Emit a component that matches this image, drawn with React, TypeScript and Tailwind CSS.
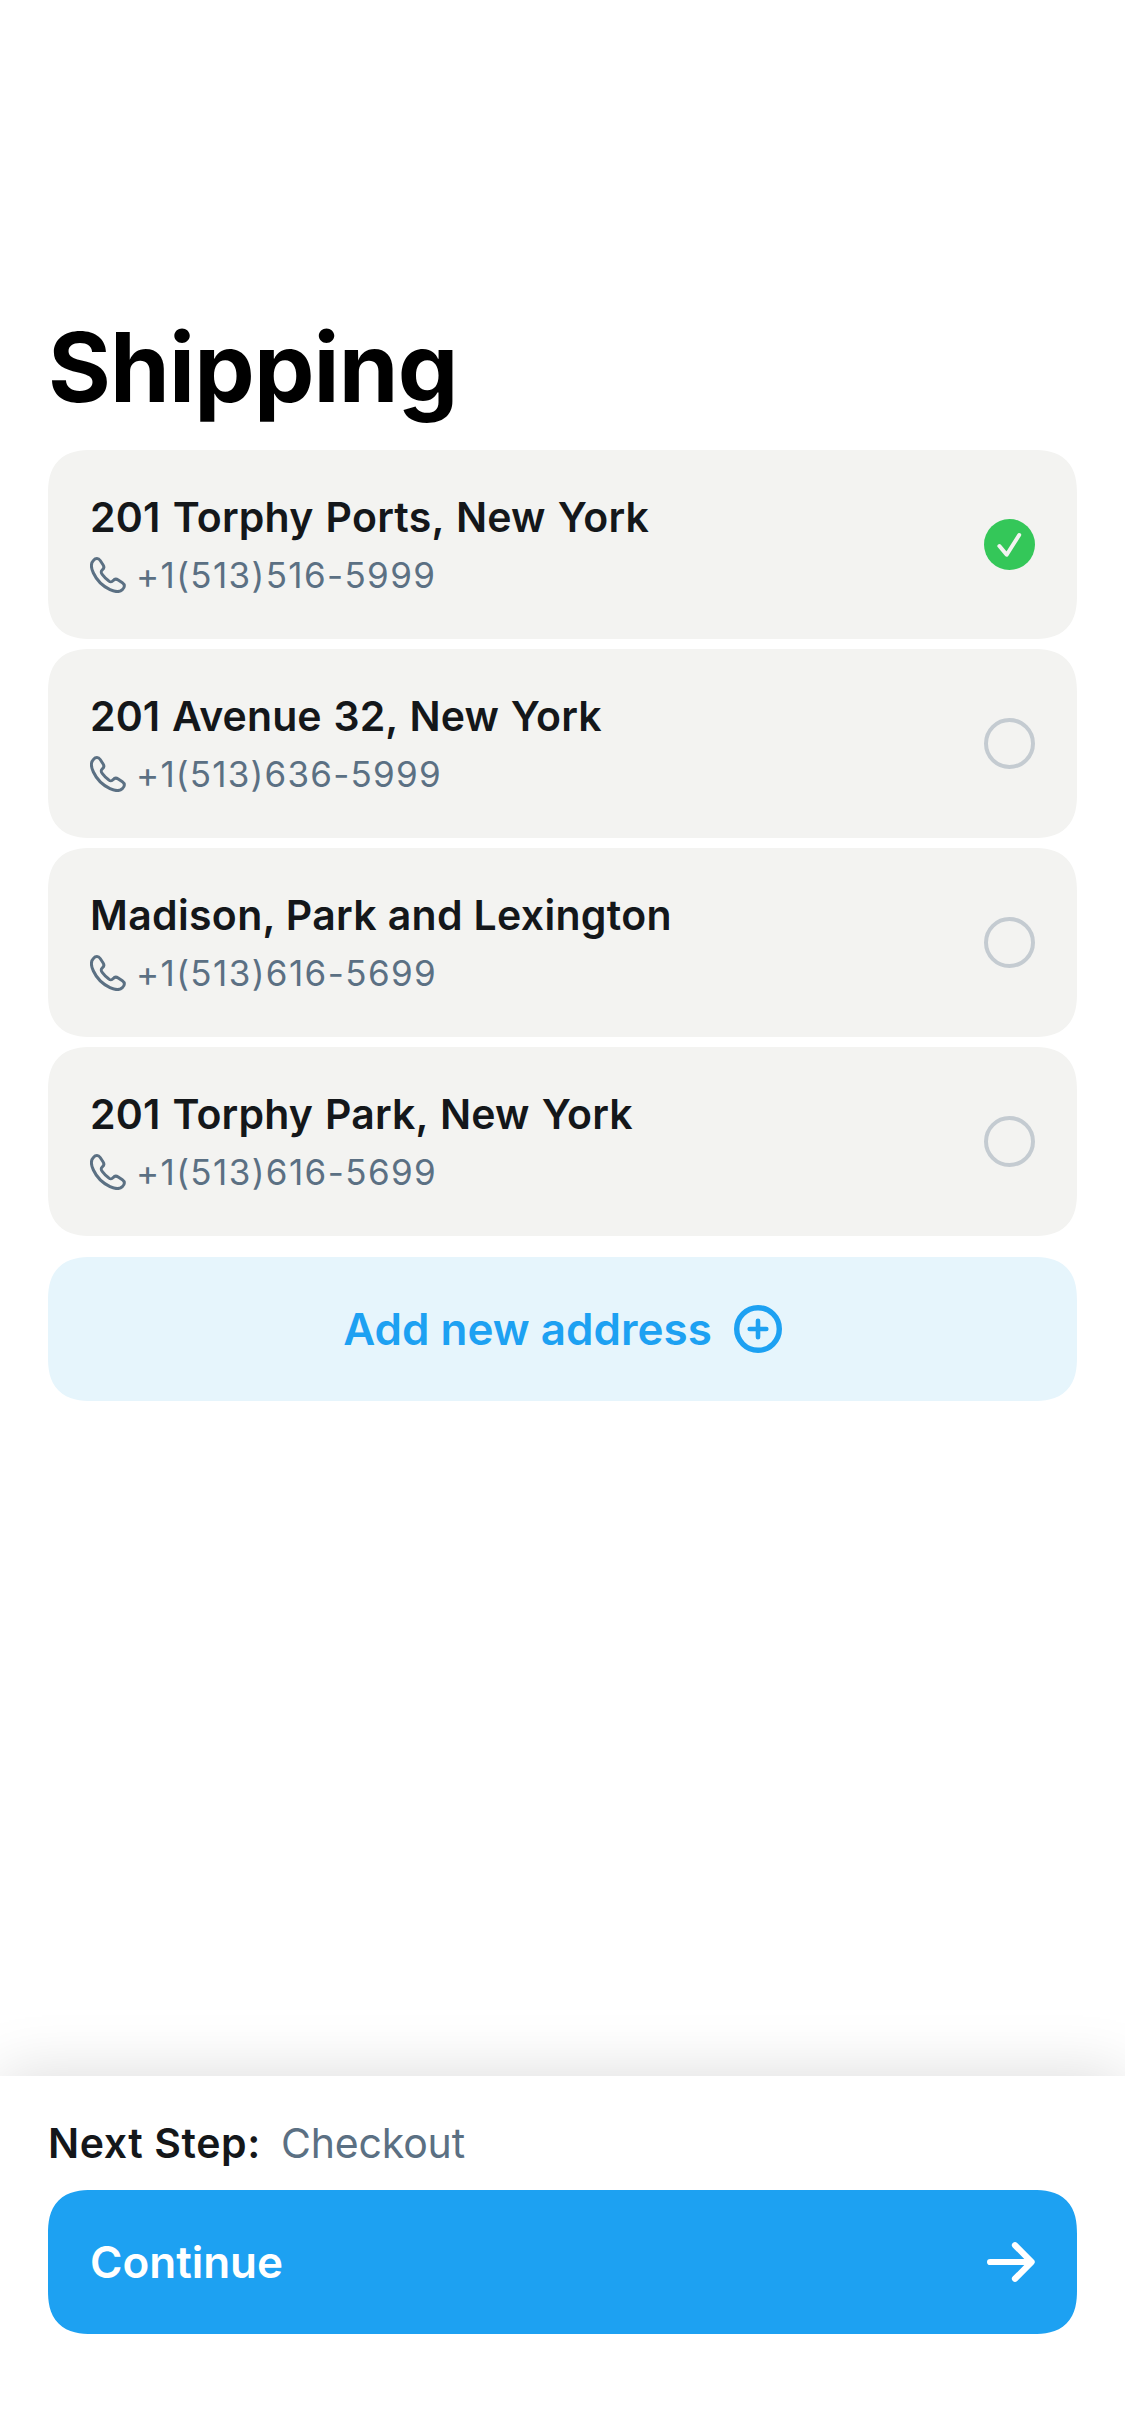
type Address = { title: string; phone: string; titleSpacing: string; phoneSpacing: string };

const addresses: Address[] = [
  {
    title: "201 Torphy Ports, New York",
    phone: "+1(513)516-5999",
    titleSpacing: "tracking-[0.2px] [word-spacing:1.6px]",
    phoneSpacing: "tracking-[1.37px]",
  },
  {
    title: "201 Avenue 32, New York",
    phone: "+1(513)636-5999",
    titleSpacing: "tracking-[0.1px] [word-spacing:1.4px]",
    phoneSpacing: "tracking-[1.22px]",
  },
  {
    title: "Madison, Park and Lexington",
    phone: "+1(513)616-5699",
    titleSpacing: "tracking-[0.33px]",
    phoneSpacing: "tracking-[1.4px]",
  },
  {
    title: "201 Torphy Park, New York",
    phone: "+1(513)616-5699",
    titleSpacing: "tracking-[0.15px] [word-spacing:1.6px]",
    phoneSpacing: "tracking-[1.4px]",
  },
];

function PhoneIcon() {
  return (
    <svg className="size-9 shrink-0" viewBox="0 0 36 36" fill="none" stroke="currentColor" strokeWidth="3" strokeLinejoin="round">
      <path d="M3.4 3.5C5.6 1 8.4 0.9 10.2 3.5L13 7.8C14.4 9.9 14.2 11.4 12.4 12.8C10.6 14.4 10.8 15.5 12.4 17.6C14.2 20 16.4 22.2 18.6 23.8C20.6 25.4 21.6 25.4 23.2 23.6C24.6 21.8 26.1 21.6 28.2 23L32.4 25.8C35 27.6 35 30.4 32.4 32.6C30 34.9 25 35 20 32.6C12.4 29 6.8 23.4 3.4 16C1 11 1 6 3.4 3.5Z" />
    </svg>
  );
}

function Radio({ selected }: { selected: boolean }) {
  if (!selected) {
    return <span className="size-[51px] shrink-0 rounded-full border-4 border-[#c4cbd1]" />;
  }
  return (
    <svg className="size-[51px] shrink-0" viewBox="0 0 51 51" fill="none">
      <circle cx="25.5" cy="25.5" r="25.5" fill="#34c759" />
      <path d="M15.4 27L22.7 35.7L35.2 16" stroke="#f3f3f1" strokeWidth="4" strokeLinecap="round" strokeLinejoin="round" />
    </svg>
  );
}

function AddressCard({ address, selected }: { address: Address; selected: boolean }) {
  return (
    <li className="flex h-[189px] items-center justify-between rounded-[44px] bg-[#f3f3f1] px-[42px] [corner-shape:superellipse(1.34)]">
      <div>
        <p className={`text-[41px] leading-[50px] font-[560] whitespace-nowrap text-[#14171a] ${address.titleSpacing}`}>{address.title}</p>
        <p className={`mt-[11px] flex items-center gap-[10px] text-[35px] leading-[44px] text-[#5b7083] ${address.phoneSpacing}`}>
          <PhoneIcon />
          {address.phone}
        </p>
      </div>
      <Radio selected={selected} />
    </li>
  );
}

export default function App() {
  return (
    <div className="flex h-[2436px] w-[1125px] flex-col overflow-hidden bg-white font-[Inter,sans-serif]">
      <main className="flex-1 px-12 pt-[309px]">
        <h1 className="text-[96px] leading-[116px] font-bold tracking-[-0.82px] text-black">Shipping</h1>
        <ul className="mt-[25px] flex flex-col gap-[10px]">
          {addresses.map((address, i) => (
            <AddressCard key={address.title} address={address} selected={i === 0} />
          ))}
        </ul>
        <button className="mt-[21px] flex h-36 w-full items-center justify-center gap-[22px] rounded-[44px] bg-[#e6f5fc] text-[44px] leading-[54px] font-[560] text-[#1da1f2] [corner-shape:superellipse(1.34)]">
          Add new address
          <svg className="size-12" viewBox="0 0 48 48" fill="none" stroke="currentColor" strokeLinecap="round">
            <circle cx="24" cy="24" r="21.3" strokeWidth="5.4" />
            <path d="M15.7 24H32.3M24 15.7V32.3" strokeWidth="4.6" />
          </svg>
        </button>
      </main>
      <footer className="h-[360px] bg-white px-12 pt-[42px] shadow-[0_0_60px_rgba(0,0,0,0.15)]">
        <p className="flex gap-5 text-[41px] leading-[50px]">
          <span className="font-[580] tracking-[0.6px] text-[#14171a]">Next Step:</span>
          <span className="tracking-[-0.17px] text-[#5b7083]">Checkout</span>
        </p>
        <button className="mt-[22px] flex h-36 w-full items-center justify-between rounded-[44px] bg-[#1da1f2] px-[42px] text-[44px] leading-[54px] font-[560] text-white [corner-shape:superellipse(1.34)]">
          Continue
          <svg className="h-[42px] w-12" viewBox="0 0 48 42" fill="none" stroke="currentColor" strokeWidth="6.2" strokeLinecap="round" strokeLinejoin="round">
            <path d="M3.1 21H44.3M28 4.2L44.6 21L28 37.8" />
          </svg>
        </button>
      </footer>
    </div>
  );
}
